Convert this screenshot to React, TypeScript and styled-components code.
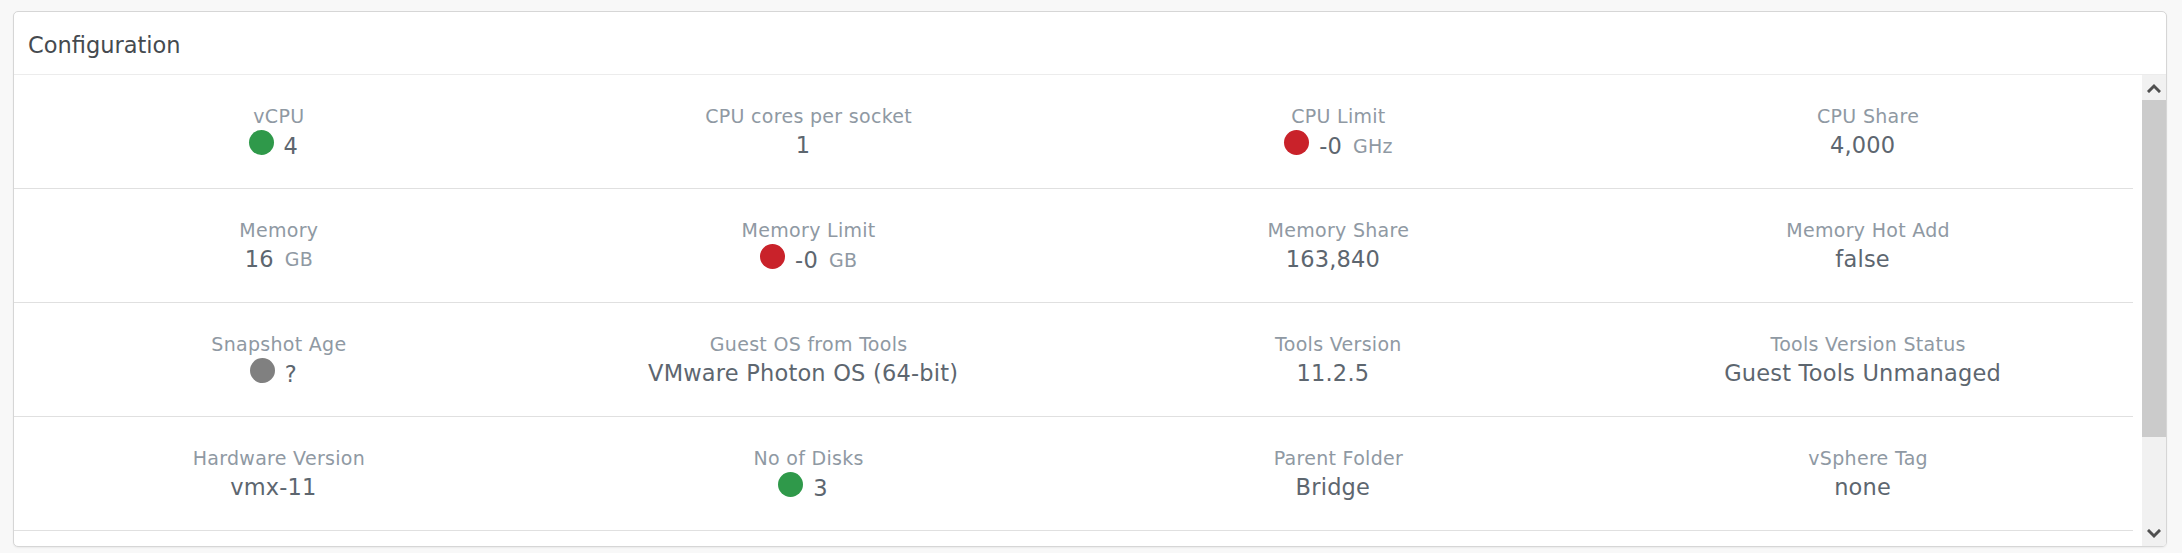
import React from "react";
import styled, { createGlobalStyle } from "styled-components";

const Global = createGlobalStyle`
  html, body {
    margin: 0;
    padding: 0;
    background: #f8f8f8;
    font-family: "DejaVu Sans", "Noto Sans", sans-serif;
  }
  * { box-sizing: border-box; }
`;

const Page = styled.div`
  padding: 11px 15px 6px 13px;
  width: 2182px;
  height: 553px;
`;

const Card = styled.section`
  height: 536px;
  background: #ffffff;
  border: 1px solid #d6d6d6;
  border-radius: 5px;
  box-shadow: 0 1px 2px rgba(0, 0, 0, 0.06);
  display: flex;
  flex-direction: column;
  overflow: hidden;
`;

const Header = styled.header`
  height: 63px;
  flex: 0 0 63px;
  border-bottom: 1px solid #ececec;
  display: flex;
  align-items: center;
  padding: 3px 14px 0 14px;
`;

const Title = styled.h2`
  margin: 0;
  font-size: 22.5px;
  font-weight: 400;
  color: #454a4f;
`;

const Body = styled.div`
  flex: 1;
  display: flex;
  min-height: 0;
`;

const Content = styled.div`
  flex: 1;
  padding-right: 9px;
  overflow: hidden;
`;

const Row = styled.div`
  height: 114px;
  border-bottom: 1px solid #e0e0e0;
  display: grid;
  grid-template-columns: repeat(4, 1fr);
`;

const Cell = styled.div`
  display: flex;
  flex-direction: column;
  align-items: center;
  padding-top: 30px;
`;

const Label = styled.div`
  font-size: 19px;
  line-height: 22px;
  letter-spacing: 0.3px;
  color: #8f99a3;
  white-space: nowrap;
`;

const ValueLine = styled.div`
  margin-top: 3px;
  display: flex;
  align-items: center;
  font-size: 22.5px;
  line-height: 30px;
  letter-spacing: 0.2px;
  color: #5d666f;
  white-space: nowrap;
`;

const Dot = styled.span<{ $tone: "green" | "red" | "gray" }>`
  width: 25px;
  height: 25px;
  border-radius: 50%;
  margin-right: 10px;
  margin-bottom: 7px;
  flex: 0 0 25px;
  background: ${(p) =>
    p.$tone === "green" ? "#2f994a" : p.$tone === "red" ? "#c9222a" : "#808080"};
`;

const Unit = styled.span`
  font-size: 19px;
  color: #8f99a3;
  margin-left: 11px;
`;

const ScrollBar = styled.div`
  width: 24px;
  flex: 0 0 24px;
  display: flex;
  flex-direction: column;
  background: #f1f1f1;
`;

const ScrollButton = styled.div<{ $h: number }>`
  height: ${(p) => p.$h}px;
  flex: 0 0 ${(p) => p.$h}px;
  display: flex;
  align-items: center;
  justify-content: center;
  background: #f1f1f1;
`;

const Thumb = styled.div`
  height: 337px;
  flex: 0 0 337px;
  background: #cbcbcb;
`;

const Track = styled.div`
  flex: 1;
`;

type Tone = "green" | "red" | "gray";
type Item = { label: string; value: string; unit?: string; dot?: Tone };

const rows: Item[][] = [
  [
    { label: "vCPU", value: "4", dot: "green" },
    { label: "CPU cores per socket", value: "1" },
    { label: "CPU Limit", value: "-0", unit: "GHz", dot: "red" },
    { label: "CPU Share", value: "4,000" },
  ],
  [
    { label: "Memory", value: "16", unit: "GB" },
    { label: "Memory Limit", value: "-0", unit: "GB", dot: "red" },
    { label: "Memory Share", value: "163,840" },
    { label: "Memory Hot Add", value: "false" },
  ],
  [
    { label: "Snapshot Age", value: "?", dot: "gray" },
    { label: "Guest OS from Tools", value: "VMware Photon OS (64-bit)" },
    { label: "Tools Version", value: "11.2.5" },
    { label: "Tools Version Status", value: "Guest Tools Unmanaged" },
  ],
  [
    { label: "Hardware Version", value: "vmx-11" },
    { label: "No of Disks", value: "3", dot: "green" },
    { label: "Parent Folder", value: "Bridge" },
    { label: "vSphere Tag", value: "none" },
  ],
];

const Chevron = ({ up }: { up?: boolean }) => (
  <svg width="14" height="10" viewBox="0 0 14 10">
    <path
      d={up ? "M2 8 L7 3 L12 8" : "M2 2 L7 7 L12 2"}
      fill="none"
      stroke="#505050"
      strokeWidth="3"
      strokeLinecap="square"
      strokeLinejoin="miter"
    />
  </svg>
);

export default function App() {
  return (
    <>
      <Global />
      <Page>
        <Card>
          <Header>
            <Title>Configuration</Title>
          </Header>
          <Body>
            <Content>
              {rows.map((r, i) => (
                <Row key={i}>
                  {r.map((it) => (
                    <Cell key={it.label}>
                      <Label>{it.label}</Label>
                      <ValueLine>
                        {it.dot && <Dot $tone={it.dot} />}
                        <span>{it.value}</span>
                        <Unit>{it.unit ?? ""}</Unit>
                      </ValueLine>
                    </Cell>
                  ))}
                </Row>
              ))}
            </Content>
            <ScrollBar>
              <ScrollButton $h={25}>
                <Chevron up />
              </ScrollButton>
              <Thumb />
              <Track />
              <ScrollButton $h={24}>
                <Chevron />
              </ScrollButton>
            </ScrollBar>
          </Body>
        </Card>
      </Page>
    </>
  );
}
